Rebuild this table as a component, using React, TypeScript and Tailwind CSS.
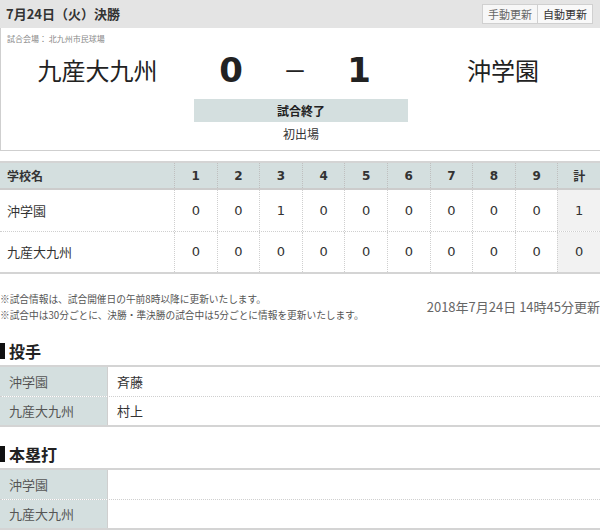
import React from "react";

const JP = { fontFamily: '"Noto Sans CJK JP", "Noto Sans", sans-serif' };

const innings = ["1", "2", "3", "4", "5", "6", "7", "8", "9"];
const rows = [
  { name: "沖学園", s: ["0", "0", "1", "0", "0", "0", "0", "0", "0"], t: "1" },
  { name: "九産大九州", s: ["0", "0", "0", "0", "0", "0", "0", "0", "0"], t: "0" },
];

function Section({ title, data }: { title: string; data: [string, string][] }) {
  return (
    <div>
      <div className="flex items-center h-[28px] mt-[3px]">
        <div className="w-[5px] h-[16px] bg-[#111]" />
        <div className="ml-[4px] text-[16px] font-bold text-[#222] leading-none">{title}</div>
      </div>
      <div className="border-t-2 border-b-2 border-[#d4d4d4]">
        {data.map(([a, b], i) => (
          <div
            key={i}
            className={
              "flex h-[29px] " + (i > 0 ? "border-t border-dotted border-[#cfcfcf]" : "")
            }
          >
            <div className="w-[108px] bg-[#d4dfdf] border-r border-[#cfcfcf] flex items-center pl-[9px] text-[13px] text-[#555]">
              {a}
            </div>
            <div className="flex-1 flex items-center pl-[9px] text-[13px] text-[#333]">{b}</div>
          </div>
        ))}
      </div>
    </div>
  );
}

export default function App() {
  return (
    <div className="w-[600px] h-[530px] bg-white overflow-hidden text-[#333]" style={JP}>
      {/* header */}
      <div className="h-[28px] bg-[#e4e4e4] flex items-center justify-between pl-[6px] pr-[7px]">
        <div className="text-[13px] font-bold text-[#333]">7月24日（火）決勝</div>
        <div className="flex border border-[#d0d0d0] bg-white">
          <div className="px-[5px] h-[18px] flex items-center text-[11px] text-[#666] bg-[#f7f7f7] border-r border-[#d0d0d0]">
            手動更新
          </div>
          <div className="px-[5px] h-[18px] flex items-center text-[11px] text-[#333] bg-[#f9f9f9]">
            自動更新
          </div>
        </div>
      </div>

      {/* game box */}
      <div className="border-l border-b border-[#cfcfcf] h-[123px]">
        <div className="pl-[6px] pt-[5px] text-[8px] leading-[12px] text-[#888]">試合会場： 北九州市民球場</div>
        <div className="grid grid-cols-[193px_214px_1fr] mt-[4px]">
          <div className="flex items-center justify-center h-[42px] text-[24px] text-[#222]">九産大九州</div>
          <div className="flex items-center justify-center h-[42px] pr-[12px]">
            <div className="w-[64px] text-center text-[34px] font-bold text-[#222]" style={{ fontFamily: '"DejaVu Sans", sans-serif' }}>0</div>
            <div className="w-[64px] text-center text-[24px] text-[#222]">－</div>
            <div className="w-[64px] text-center text-[34px] font-bold text-[#222]" style={{ fontFamily: '"DejaVu Sans", sans-serif' }}>1</div>
          </div>
          <div className="flex items-center justify-center h-[42px] text-[24px] text-[#222] pr-[2px]">沖学園</div>
          <div />
          <div className="mt-[8px] h-[23px] bg-[#d4dfdf] flex items-center justify-center text-[12px] font-bold text-[#222]">
            試合終了
          </div>
          <div />
          <div />
          <div className="h-[24px] flex items-center justify-center text-[12px] text-[#333]">初出場</div>
          <div />
        </div>
      </div>

      {/* score table */}
      <div className="mt-[10px] border-t-2 border-b-2 border-[#d4d4d4]">
        <div className="grid grid-cols-[174px_repeat(10,1fr)] h-[27px] bg-[#d4dfdf] border-b-2 border-[#cccccc] text-[12px] font-bold text-[#333]">
          <div className="flex items-center pl-[7px]">学校名</div>
          {innings.map((n) => (
            <div key={n} className="flex items-center justify-center border-l border-dotted border-[#bfbfbf]" style={{ fontFamily: '"DejaVu Sans", sans-serif' }}>
              {n}
            </div>
          ))}
          <div className="flex items-center justify-center border-l border-dotted border-[#bfbfbf]">計</div>
        </div>
        {rows.map((r, i) => (
          <div
            key={i}
            className={
              "grid grid-cols-[174px_repeat(10,1fr)] h-[41px] text-[13px] text-[#333] " +
              (i > 0 ? "border-t border-dotted border-[#cfcfcf]" : "")
            }
          >
            <div className="flex items-center pl-[7px]">{r.name}</div>
            {r.s.map((v, j) => (
              <div key={j} className="flex items-center justify-center border-l border-dotted border-[#cfcfcf]" style={{ fontFamily: '"DejaVu Sans", sans-serif' }}>
                {v}
              </div>
            ))}
            <div className="flex items-center justify-center border-l border-dotted border-[#cfcfcf] bg-[#f2f2f2]" style={{ fontFamily: '"DejaVu Sans", sans-serif' }}>
              {r.t}
            </div>
          </div>
        ))}
      </div>

      {/* notes */}
      <div className="flex items-center justify-between mt-[17px]">
        <div className="text-[9.7px] leading-[16px] text-[#555]">
          <div>※試合情報は、試合開催日の午前8時以降に更新いたします。</div>
          <div>※試合中は30分ごとに、決勝・準決勝の試合中は5分ごとに情報を更新いたします。</div>
        </div>
        <div className="text-[13px] text-[#666] whitespace-nowrap">2018年7月24日 14時45分更新</div>
      </div>

      <div className="mt-[14px]">
        <Section title="投手" data={[["沖学園", "斉藤"], ["九産大九州", "村上"]]} />
      </div>
      <div className="mt-[13px]">
        <Section title="本塁打" data={[["沖学園", ""], ["九産大九州", ""]]} />
      </div>
    </div>
  );
}
